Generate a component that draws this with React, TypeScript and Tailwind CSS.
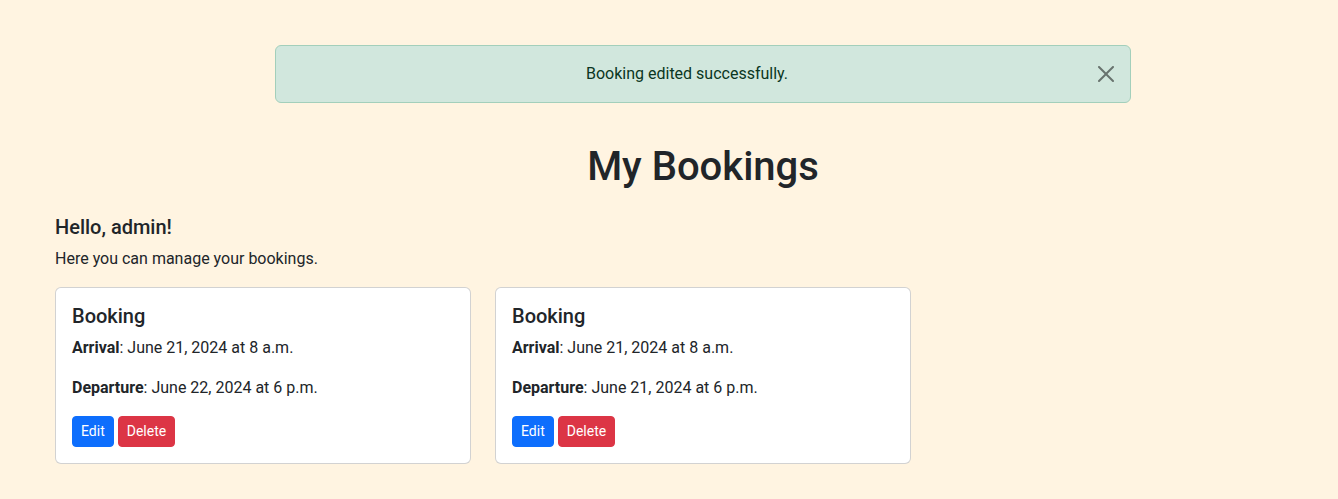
import React from 'react';

interface Booking {
  id: number;
  arrival: string;
  departure: string;
}

const bookings: Booking[] = [
  { id: 1, arrival: 'June 21, 2024 at 8 a.m.', departure: 'June 22, 2024 at 6 p.m.' },
  { id: 2, arrival: 'June 21, 2024 at 8 a.m.', departure: 'June 21, 2024 at 6 p.m.' },
];

const CloseIcon = () => (
  <svg viewBox="0 0 16 16" className="w-4 h-4" fill="currentColor">
    <path d="M.293.293a1 1 0 0 1 1.414 0L8 6.586 14.293.293a1 1 0 1 1 1.414 1.414L9.414 8l6.293 6.293a1 1 0 0 1-1.414 1.414L8 9.414l-6.293 6.293a1 1 0 0 1-1.414-1.414L6.586 8 .293 1.707a1 1 0 0 1 0-1.414" />
  </svg>
);

const BookingCard: React.FC<{ booking: Booking }> = ({ booking }) => (
  <div className="bg-white border border-black/[0.175] rounded-md p-4">
    <h5 className="text-[20px] font-medium leading-[1.2] mb-2">Booking</h5>
    <p className="leading-6 mb-4">
      <strong className="font-bold">Arrival</strong>: {booking.arrival}
    </p>
    <p className="leading-6 mb-4">
      <strong className="font-bold">Departure</strong>: {booking.departure}
    </p>
    <div className="flex gap-1">
      <button className="bg-[#0d6efd] border border-[#0d6efd] text-white text-[14px] leading-[21px] px-2 py-1 rounded">Edit</button>
      <button className="bg-[#dc3545] border border-[#dc3545] text-white text-[14px] leading-[21px] px-2 py-1 rounded">Delete</button>
    </div>
  </div>
);

export default function App() {
  return (
    <div className="min-h-screen w-full overflow-hidden bg-[#fff4e1] font-['Roboto',sans-serif] text-[16px] text-[#212529]">
      <div className="ml-[43px] w-[1320px] px-3 pt-[45px]">
        <div className="relative w-[856px] mx-auto bg-[#d1e7dd] border border-[#a3cfbb] text-[#0a3622] rounded-md py-4 pl-4 pr-12 text-center leading-6">
          Booking edited successfully.
          <button className="absolute top-0 right-0 px-4 py-5 text-black/50">
            <CloseIcon />
          </button>
        </div>

        <h1 className="text-center text-[40px] font-medium leading-[1.2] mt-10 mb-6">My Bookings</h1>

        <h5 className="text-[20px] font-medium leading-[1.2] mb-2">Hello, admin!</h5>
        <p className="leading-6 mb-4">Here you can manage your bookings.</p>

        <div className="grid grid-cols-3 gap-6">
          {bookings.map(b => (
            <BookingCard key={b.id} booking={b} />
          ))}
        </div>
      </div>
    </div>
  );
}
